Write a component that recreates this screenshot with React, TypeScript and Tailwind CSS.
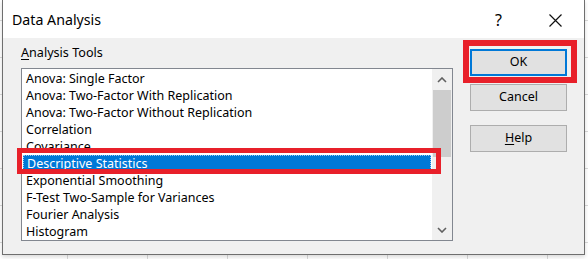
import React from "react";

const tools = [
  "Anova: Single Factor",
  "Anova: Two-Factor With Replication",
  "Anova: Two-Factor Without Replication",
  "Correlation",
  "Covariance",
  "Descriptive Statistics",
  "Exponential Smoothing",
  "F-Test Two-Sample for Variances",
  "Fourier Analysis",
  "Histogram",
];

function Chevron({ up }: { up?: boolean }) {
  return (
    <svg width="10" height="6" viewBox="0 0 10 6" className="block">
      <polyline
        points={up ? "1,5 5,1 9,5" : "1,1 5,5 9,1"}
        fill="none"
        stroke="#606060"
        strokeWidth="1.6"
      />
    </svg>
  );
}

function DialogButton({
  children,
  primary,
}: {
  children: React.ReactNode;
  primary?: boolean;
}) {
  return (
    <button
      className={
        "w-[97px] h-[27px] bg-[#e1e1e1] text-[12.5px] text-black flex items-center justify-center " +
        (primary ? "border-2 border-[#0078d7]" : "border border-[#adadad]")
      }
    >
      {children}
    </button>
  );
}

export default function App() {
  return (
    <div
      className="relative w-[588px] h-[259px] overflow-hidden bg-white pl-[2px] bg-[linear-gradient(to_right,#d9d9d9_1px,transparent_1px),linear-gradient(to_bottom,#d9d9d9_1px,transparent_1px)] bg-[size:80px_37px] bg-[position:67px_20px]"
      style={{ fontFamily: '"Noto Sans", "Open Sans", sans-serif' }}
    >
      {/* Dialog */}
      <div className="w-[583px] h-[255px] border-x border-b border-[#6f6f6f] flex flex-col shadow-[0_2px_4px_rgba(0,0,0,0.15)]">
        {/* Title bar */}
        <div className="h-[38px] bg-white flex items-center pl-[9px] pr-[22px] pt-[2px]">
          <span className="text-[14.2px] text-black">Data Analysis</span>
          <span className="ml-auto text-[16px] text-black mr-[47px]">?</span>
          <svg width="13" height="13" viewBox="0 0 13 13">
            <path d="M0.5 0.5 L12.5 12.5 M12.5 0.5 L0.5 12.5" stroke="#111" strokeWidth="1.2" />
          </svg>
        </div>

        {/* Body */}
        <div className="flex-1 bg-[#f0f0f0] flex pl-[18px]">
          <div className="flex flex-col">
            <div className="pt-[6px] h-[30px] text-[12.6px] text-black leading-[17px]">
              <span className="underline underline-offset-2">A</span>nalysis Tools
            </div>
            <div className="w-[432px] h-[173px] border border-[#828790] bg-white flex">
              <div className="flex-1 flex flex-col pt-[1px]">
                {tools.map((t, i) =>
                  i === 5 ? (
                    <div
                      key={t}
                      className="h-[17px] mx-[1px] bg-[#0078d7] border border-dotted border-[#9cc8ef] pl-[3px] text-[12.5px] leading-[15px] text-white"
                    >
                      {t}
                    </div>
                  ) : (
                    <div key={t} className="h-[17px] pl-[4px] text-[12.5px] leading-[17px] text-black">
                      {t}
                    </div>
                  )
                )}
              </div>
              {/* Scrollbar */}
              <div className="w-[20px] bg-[#f0f0f0] flex flex-col">
                <div className="h-[21px] flex items-center justify-center">
                  <Chevron up />
                </div>
                <div className="h-[67px] mx-[1px] bg-[#cdcdcd]" />
                <div className="flex-1" />
                <div className="h-[21px] flex items-center justify-center">
                  <Chevron />
                </div>
              </div>
            </div>
          </div>

          <div className="ml-[17px] flex flex-col pt-[11px]">
            <DialogButton primary>OK</DialogButton>
            <div className="h-[8px]" />
            <DialogButton>Cancel</DialogButton>
            <div className="h-[14px]" />
            <DialogButton>
              <span className="underline underline-offset-2">H</span>elp
            </DialogButton>
          </div>
        </div>
      </div>

      {/* Red highlight boxes */}
      <div className="absolute left-[17px] top-[148px] w-[424px] h-[26px] border-[5px] border-[#e8202a]" />
      <div className="absolute left-[463px] top-[40px] w-[114px] h-[43px] border-[6px] border-[#e8202a]" />
    </div>
  );
}
